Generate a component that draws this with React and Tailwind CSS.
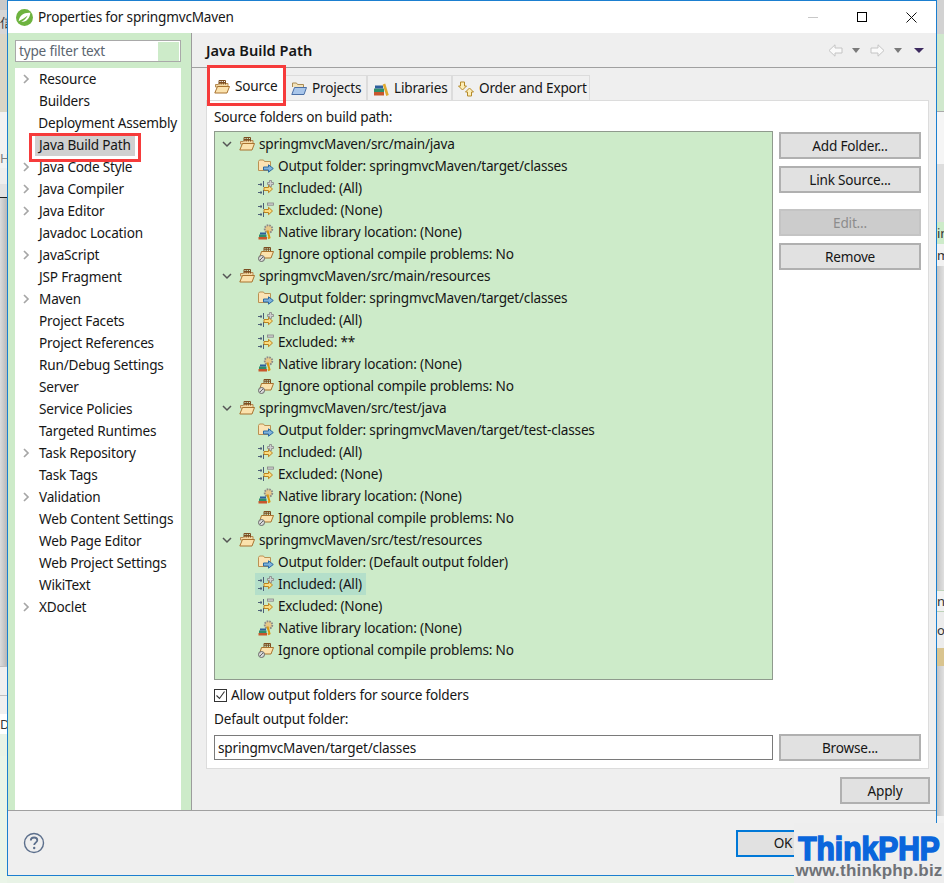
import { Fragment } from 'react';

const prefs = [
  ['Resource', true],
  ['Builders'],
  ['Deployment Assembly'],
  ['Java Build Path', false, true],
  ['Java Code Style', true],
  ['Java Compiler', true],
  ['Java Editor', true],
  ['Javadoc Location'],
  ['JavaScript', true],
  ['JSP Fragment'],
  ['Maven', true],
  ['Project Facets'],
  ['Project References'],
  ['Run/Debug Settings'],
  ['Server'],
  ['Service Policies'],
  ['Targeted Runtimes'],
  ['Task Repository', true],
  ['Task Tags'],
  ['Validation', true],
  ['Web Content Settings'],
  ['Web Page Editor'],
  ['Web Project Settings'],
  ['WikiText'],
  ['XDoclet', true],
];

const sources = [
  { path: 'springmvcMaven/src/main/java', output: 'springmvcMaven/target/classes', excluded: '(None)' },
  { path: 'springmvcMaven/src/main/resources', output: 'springmvcMaven/target/classes', excluded: '**' },
  { path: 'springmvcMaven/src/test/java', output: 'springmvcMaven/target/test-classes', excluded: '(None)' },
  { path: 'springmvcMaven/src/test/resources', output: '(Default output folder)', excluded: '(None)', active: true },
];

const Chevron = ({ open }) => (
  <svg width="10" height="10" viewBox="0 0 10 10" fill="none" className="shrink-0">
    {open ? (
      <path d="M1 3 L5 7 L9 3" stroke="#555" strokeWidth="1.5" />
    ) : (
      <path d="M3 1 L7 5 L3 9" stroke="#a6a6a6" strokeWidth="1.7" />
    )}
  </svg>
);

// open package folder with the crate grid on top
const PackageIcon = () => (
  <svg width="16" height="16" viewBox="0 0 16 16" className="shrink-0">
    <path d="M1.500 5.500h2.500l1-1h9v3.500H1.500z" fill="#f3d9a4" stroke="#b58a52" />
    <path d="M5 5.500V1.500h6.500v4M7.200 1.500v4M9.400 1.500v4M5 3.500h6.500" fill="none" stroke="#7c4e22" strokeWidth="1" />
    <path d="M3.500 7.500h12l-2.500 6.500H.8z" fill="#fbe2ad" stroke="#a9732f" strokeLinejoin="round" />
  </svg>
);

const OutputIcon = () => (
  <svg width="16" height="16" viewBox="0 0 16 16" className="shrink-0">
    <path d="M.5 3.500l1-1.500h4l1 1.500h6v9h-12z" fill="#fbe3b4" stroke="#bb9152" />
    <path d="M5.500 9h5V6.800l4.800 3.700-4.800 3.700V12h-5z" fill="#7fb2dc" stroke="#2a6aa3" strokeLinejoin="round" />
  </svg>
);

const FilterBase = () => (
  <>
    <path d="M0 4.500h4M0 12.500h4M3 3v3M3 11v3M5.500 1v6M5.500 10v5" stroke="#4d5f78" strokeWidth="1" fill="none" />
    <path d="M6 7.500h4.500V5.300L14.500 9l-4 3.700V10.500H6z" fill="#fbdc80" stroke="#bd8420" strokeLinejoin="round" />
  </>
);

const IncludeIcon = () => (
  <svg width="16" height="16" viewBox="0 0 16 16" className="shrink-0">
    <FilterBase />
    <path d="M9.500 2.500h2V.5h2v2h2v2h-2v2h-2v-2h-2z" fill="#cfcfcf" stroke="#858585" strokeWidth="0.8" />
  </svg>
);

const ExcludeIcon = () => (
  <svg width="16" height="16" viewBox="0 0 16 16" className="shrink-0">
    <FilterBase />
    <rect x="9.500" y="1" width="6" height="2.200" fill="#cfcfcf" stroke="#858585" strokeWidth="0.8" />
  </svg>
);

const NativeIcon = () => (
  <svg width="16" height="16" viewBox="0 0 16 16" className="shrink-0">
    <circle cx="10.500" cy="5" r="3.800" fill="#e6c98a" stroke="#8a8a8a" strokeWidth="1.800" strokeDasharray="1.600 1" />
    <path d="M9.500 6.500l2 7-1.500 1" fill="none" stroke="#d9960f" strokeWidth="2" />
    <rect x="0.500" y="13" width="8.500" height="2.500" fill="#c8562c" />
    <rect x="1" y="10.500" width="7.500" height="2.500" fill="#2f8f6a" />
    <rect x="2" y="8.500" width="6" height="2" fill="#2d5f9c" />
  </svg>
);

const IgnoreIcon = () => (
  <svg width="16" height="16" viewBox="0 0 16 16" className="shrink-0">
    <path d="M6 5V1.500h6.500V5M8.200 1.500V5M10.400 1.500V5M6 3.200h6.500" fill="none" stroke="#7c4e22" />
    <path d="M3.500 5.500h12l-2.500 6.500H1.500z" fill="#fbe2ad" stroke="#a9732f" strokeLinejoin="round" />
    <circle cx="3.500" cy="12.500" r="3" fill="#d9d9d9" stroke="#666" />
    <path d="M2 14l3-3" stroke="#666" />
  </svg>
);

const ProjectsIcon = () => (
  <svg width="16" height="16" viewBox="0 0 16 16" className="shrink-0">
    <path d="M1.500 6V2h4l1 1.500h6V6" fill="#f3e3bb" stroke="#a98b55" />
    <path d="M3.500 6.500h12l-2.500 7H.8z" fill="#a9c6ea" stroke="#4a6fa6" strokeLinejoin="round" />
  </svg>
);

const LibrariesIcon = () => (
  <svg width="16" height="16" viewBox="0 0 16 16" className="shrink-0">
    <rect x="1" y="11" width="10" height="3.500" fill="#c8562c" />
    <rect x="1" y="7.500" width="10" height="3.500" fill="#2f8f6a" />
    <rect x="2" y="4.500" width="8" height="3" fill="#2d5f9c" />
    <path d="M11 3l3.500 11.500" stroke="#e0a92e" strokeWidth="2.600" />
  </svg>
);

const OrderIcon = () => (
  <svg width="16" height="16" viewBox="0 0 16 16" className="shrink-0">
    <path d="M2.500 1h4v4h2l-4 4-4-4h2z" fill="#fdeeb8" stroke="#b58a2a" strokeLinejoin="round" />
    <path d="M9.500 15v-4h-2l4-4 4 4h-2v4z" fill="#fdeeb8" stroke="#b58a2a" strokeLinejoin="round" />
  </svg>
);

const SpringLeaf = () => (
  <svg width="17" height="17" viewBox="0 0 16 16" className="shrink-0">
    <circle cx="8" cy="8" r="8" fill="#6db33f" />
    <path d="M2.500 11.500C3 6 7.500 3 13.500 3.500 13 9 9.500 12.500 5 12c3-1.500 5-4 6-6-2.500 2-5 3.500-8.500 5.500z" fill="#fff" />
  </svg>
);

const NavArrow = ({ flip }) => (
  <svg width="15" height="13" viewBox="0 0 15 13" className={flip ? 'shrink-0 -scale-x-100' : 'shrink-0'}>
    <path d="M7 .8L1 6.500l6 5.700V9h7V4H7z" fill="#fafafa" stroke="#c4c4c4" strokeLinejoin="round" />
  </svg>
);

const DropTriangle = ({ color = 'border-t-[#7a7a7a]', wide }) => (
  <span
    className={`inline-block h-0 w-0 border-x-[4px] border-t-[5px] border-x-transparent ${color} ${wide ? 'border-x-[5px]' : ''}`}
  />
);

const PushButton = ({ children, disabled, className = '' }) => (
  <div
    className={`flex h-[27px] items-center justify-center border-2 pt-px ${
      disabled ? 'border-[#c4c4c4] bg-[#cccccc] text-[#8c8c8c]' : 'border-[#b0b0b0] bg-[#e1e1e1]'
    } ${className}`}
  >
    {children}
  </div>
);

const TreeLeaf = ({ icon, label, active }) => (
  <div className="flex h-[22px] items-center pl-[40px]">
    <div className={`flex h-[22px] items-center gap-[4px] pl-[3px] pr-[4px] ${active ? 'bg-[#b4dfca]' : ''}`}>
      {icon}
      <span>{label}</span>
    </div>
  </div>
);

const SourceEntry = ({ path, output, excluded, active }) => (
  <>
    <div className="flex h-[22px] items-center pl-[7px]">
      <Chevron open />
      <span className="ml-[7px] mr-[4px]">
        <PackageIcon />
      </span>
      <span>{path}</span>
    </div>
    <TreeLeaf icon={<OutputIcon />} label={`Output folder: ${output}`} />
    <TreeLeaf icon={<IncludeIcon />} label="Included: (All)" active={active} />
    <TreeLeaf icon={<ExcludeIcon />} label={`Excluded: ${excluded}`} />
    <TreeLeaf icon={<NativeIcon />} label="Native library location: (None)" />
    <TreeLeaf icon={<IgnoreIcon />} label="Ignore optional compile problems: No" />
  </>
);

const Tab = ({ icon, label, width }) => (
  <div className={`flex h-[25px] items-center gap-[5px] border-x border-t border-[#dcdcdc] bg-[#f0f0f0] pl-[5px] pt-px ${width}`}>
    {icon}
    <span>{label}</span>
  </div>
);

// slivers of the workbench visible either side of the dialog
const LeftEdge = () => (
  <div className="flex w-[7px] shrink-0 flex-col overflow-hidden text-[13px] leading-none text-[#333]">
    <div className="h-[10px] bg-[#c9c9c9]" />
    <div className="flex h-[24px] items-center bg-[#d6d6d6]">
      <span>信</span>
    </div>
    <div className="h-[78px] bg-[#d9d6c6]" />
    <div className="h-[36px] bg-[#f2f2f2]" />
    <div className="flex h-[20px] items-center bg-[#f2f2f2] text-[#7d7d7d]">
      <span>H</span>
    </div>
    <div className="h-[16px] bg-[#eeeeee]" />
    <div className="h-[14px] border-b border-[#222] bg-[#e2e2e2]" />
    <div className="h-[468px] bg-gradient-to-r from-[#dcdcdc] to-[#b8b8b8]" />
    <div className="h-[30px] border-y border-[#c0c0c0] bg-[#f0f0f0]" />
    <div className="h-[18px] bg-[#f0f0f0]" />
    <div className="flex h-[20px] items-center bg-[#ffffff]">
      <span>D</span>
    </div>
    <div className="h-[22px] bg-[#e9f3e6]" />
    <div className="flex-1 bg-[#eaf5e8]" />
  </div>
);

const RightEdge = () => (
  <div className="flex w-[7px] shrink-0 flex-col overflow-hidden text-[13px] leading-none text-[#333]">
    <div className="h-[34px] bg-[#d2d2d2]" />
    <div className="h-[78px] border-b border-[#aaaaaa] bg-[#d0e8cd]" />
    <div className="h-[52px] bg-[#f5f5f5]" />
    <div className="h-[58px] bg-[#dddddd]" />
    <div className="flex h-[22px] items-center bg-[#cdebc9]">
      <span>in</span>
    </div>
    <div className="flex h-[22px] items-center bg-[#f2f2f2]">
      <span>m</span>
    </div>
    <div className="h-[324px] bg-gradient-to-r from-[#c4c4c4] to-[#e0e0e0]" />
    <div className="flex h-[22px] items-center border-y border-[#bcd2b8] bg-[#f2f2f2]">
      <span>n</span>
    </div>
    <div className="flex h-[36px] items-center bg-[#ececec]">
      <span>ob</span>
    </div>
    <div className="h-[18px] bg-[#d9c48f]" />
    <div className="h-[150px] bg-gradient-to-r from-[#c4c4c4] to-[#e0e0e0]" />
    <div className="flex-1 bg-[#f1f1f1]" />
  </div>
);

export default function App() {
  return (
    <div className="relative flex h-[883px] w-[944px] overflow-hidden whitespace-nowrap bg-[#e8f3e6] font-['Noto_Sans',sans-serif] text-[13.6px] tracking-[-0.2px] text-[#161616]">
      <LeftEdge />

      <div className="flex h-[876px] w-[930px] shrink-0 flex-col border border-[#1b7fd0]">
        {/* title bar */}
        <div className="flex h-[32px] shrink-0 items-center bg-white pl-[8px]">
          <SpringLeaf />
          <span className="ml-[5px] flex-1">Properties for springmvcMaven</span>
          <div className="h-px w-[10px] bg-[#c8c8c8]" />
          <div className="ml-[39px] h-[10px] w-[10px] border border-black" />
          <svg width="11" height="11" viewBox="0 0 11 11" className="ml-[39px] mr-[19px]">
            <path d="M.5.5l10 10M10.500.5l-10 10" stroke="#111" fill="none" />
          </svg>
        </div>

        <div className="flex h-[777px] shrink-0">
          {/* preference tree */}
          <div className="flex w-[184px] shrink-0 flex-col border-r border-[#9c9c9c] bg-[#cdebc9] pl-[7px] pr-[10px] pt-[7px]">
            <div className="flex h-[22px] shrink-0 items-center justify-between border border-[#a9a9a9] bg-white pl-[3px] pr-px text-[#5c6670]">
              <span>type filter text</span>
              <div className="h-[19px] w-[21px] bg-[#cdebc9]" />
            </div>
            <div className="mt-[6px] flex-1 bg-white">
              {prefs.map(([name, expandable, selected]) => (
                <div key={name} className="flex h-[22px] items-center pl-[6px]">
                  <span className="w-[10px]">{expandable && <Chevron />}</span>
                  <span className={`ml-[4px] flex h-[22px] items-center pl-[4px] pr-[4px] ${selected ? 'bg-[#d0d0d0]' : ''}`}>
                    {name}
                  </span>
                </div>
              ))}
            </div>
          </div>

          {/* page area */}
          <div className="flex min-w-0 flex-1 flex-col bg-[#efefef]">
            <div className="flex h-[35px] shrink-0 items-center border-b border-[#a0a0a0] pl-[14px] pr-[12px]">
              <span className="flex-1 pt-px text-[14.6px] font-semibold tracking-normal">Java Build Path</span>
              <NavArrow />
              <span className="ml-[9px] flex">
                <DropTriangle />
              </span>
              <span className="ml-[10px]">
                <NavArrow flip />
              </span>
              <span className="ml-[9px] flex">
                <DropTriangle />
              </span>
              <span className="ml-[12px] flex">
                <DropTriangle color="border-t-[#3d2a5f]" wide />
              </span>
            </div>

            <div className="flex h-[32px] shrink-0 items-end pl-[16px]">
              <div className="flex h-[33px] w-[77px] items-center gap-[5px] bg-white pl-[6px] pt-[6px]">
                <PackageIcon />
                <span>Source</span>
              </div>
              <Tab icon={<ProjectsIcon />} label="Projects" width="w-[82px]" />
              <Tab icon={<LibrariesIcon />} label="Libraries" width="w-[85px]" />
              <Tab icon={<OrderIcon />} label="Order and Export" width="w-[138px]" />
            </div>

            <div className="ml-[14px] flex h-[669px] w-[723px] shrink-0 flex-col border border-[#dcdcdc] bg-white pl-[7px] pr-[7px]">
              <div className="mt-[5px] flex h-[22px] shrink-0 items-center">Source folders on build path:</div>
              <div className="mt-[3px] flex shrink-0 gap-[6px]">
                <div className="h-[549px] w-[559px] shrink-0 border border-[#8f9a8d] bg-[#cdebc9] pt-px">
                  {sources.map((source) => (
                    <Fragment key={source.path}>
                      <SourceEntry {...source} />
                    </Fragment>
                  ))}
                </div>
                <div className="flex w-[142px] shrink-0 flex-col pt-px">
                  <PushButton>Add Folder...</PushButton>
                  <PushButton className="mt-[7px]">Link Source...</PushButton>
                  <PushButton className="mt-[16px]" disabled>
                    Edit...
                  </PushButton>
                  <PushButton className="mt-[7px]">Remove</PushButton>
                </div>
              </div>
              <div className="mt-[6px] flex h-[18px] shrink-0 items-center">
                <div className="flex h-[13px] w-[13px] items-center justify-center border border-[#333] bg-white">
                  <svg width="11" height="11" viewBox="0 0 11 11">
                    <path d="M1.500 5.500l3 3 5-7" fill="none" stroke="#333" strokeWidth="1.100" />
                  </svg>
                </div>
                <span className="ml-[4px]">Allow output folders for source folders</span>
              </div>
              <div className="mt-[5px] flex h-[20px] shrink-0 items-center">Default output folder:</div>
              <div className="mt-[5px] flex h-[27px] shrink-0 items-center gap-[6px]">
                <div className="flex h-[25px] w-[559px] items-center border border-[#7a7a7a] pl-[3px] pt-px">
                  springmvcMaven/target/classes
                </div>
                <PushButton className="w-[142px]">Browse...</PushButton>
              </div>
            </div>

            <div className="flex flex-1 justify-end pr-[6px] pt-[8px]">
              <PushButton className="w-[90px]">Apply</PushButton>
            </div>
          </div>
        </div>

        {/* button bar */}
        <div className="flex flex-1 items-center justify-between border-t border-[#a0a0a0] bg-[#efefef] pl-[15px] pr-[106px]">
          <svg width="22" height="22" viewBox="0 0 22 22">
            <circle cx="11" cy="11" r="9.500" fill="none" stroke="#5c6f8c" strokeWidth="1.400" />
            <path
              d="M7.800 8.500c0-2 1.500-3 3.300-3 1.900 0 3.200 1.100 3.200 2.700 0 2.400-3.100 2.400-3.100 4.800"
              fill="none"
              stroke="#5c6f8c"
              strokeWidth="1.800"
            />
            <circle cx="11.200" cy="16" r="1.200" fill="#5c6f8c" />
          </svg>
          <div className="flex h-[27px] w-[94px] items-center justify-center border-2 border-[#0078d7] bg-[#e1e1e1]">OK</div>
        </div>
      </div>

      <RightEdge />

      {/* red callouts */}
      <div className="absolute left-[207px] top-[65px] h-[41px] w-[79px] border-[3px] border-[#f63b3b]" />
      <div className="absolute left-[29px] top-[133px] h-[29px] w-[112px] border-[3px] border-[#f63b3b]" />

      {/* site watermark */}
      <div className="absolute left-[794px] top-[823px] flex h-[60px] w-[150px] flex-col items-center bg-[#eeeeee] font-['Liberation_Sans',sans-serif] font-bold tracking-normal">
        <span className="mt-[12px] origin-top scale-y-[1.1] text-[30px] leading-[26px] text-[#0a66dc] [-webkit-text-stroke:1.5px_#0a66dc]">ThinkPHP</span>
        <span className="mt-[3px] text-[17px] leading-[14px] tracking-[0.2px] text-[#6f7277]">www.thinkphp.biz</span>
      </div>
    </div>
  );
}
